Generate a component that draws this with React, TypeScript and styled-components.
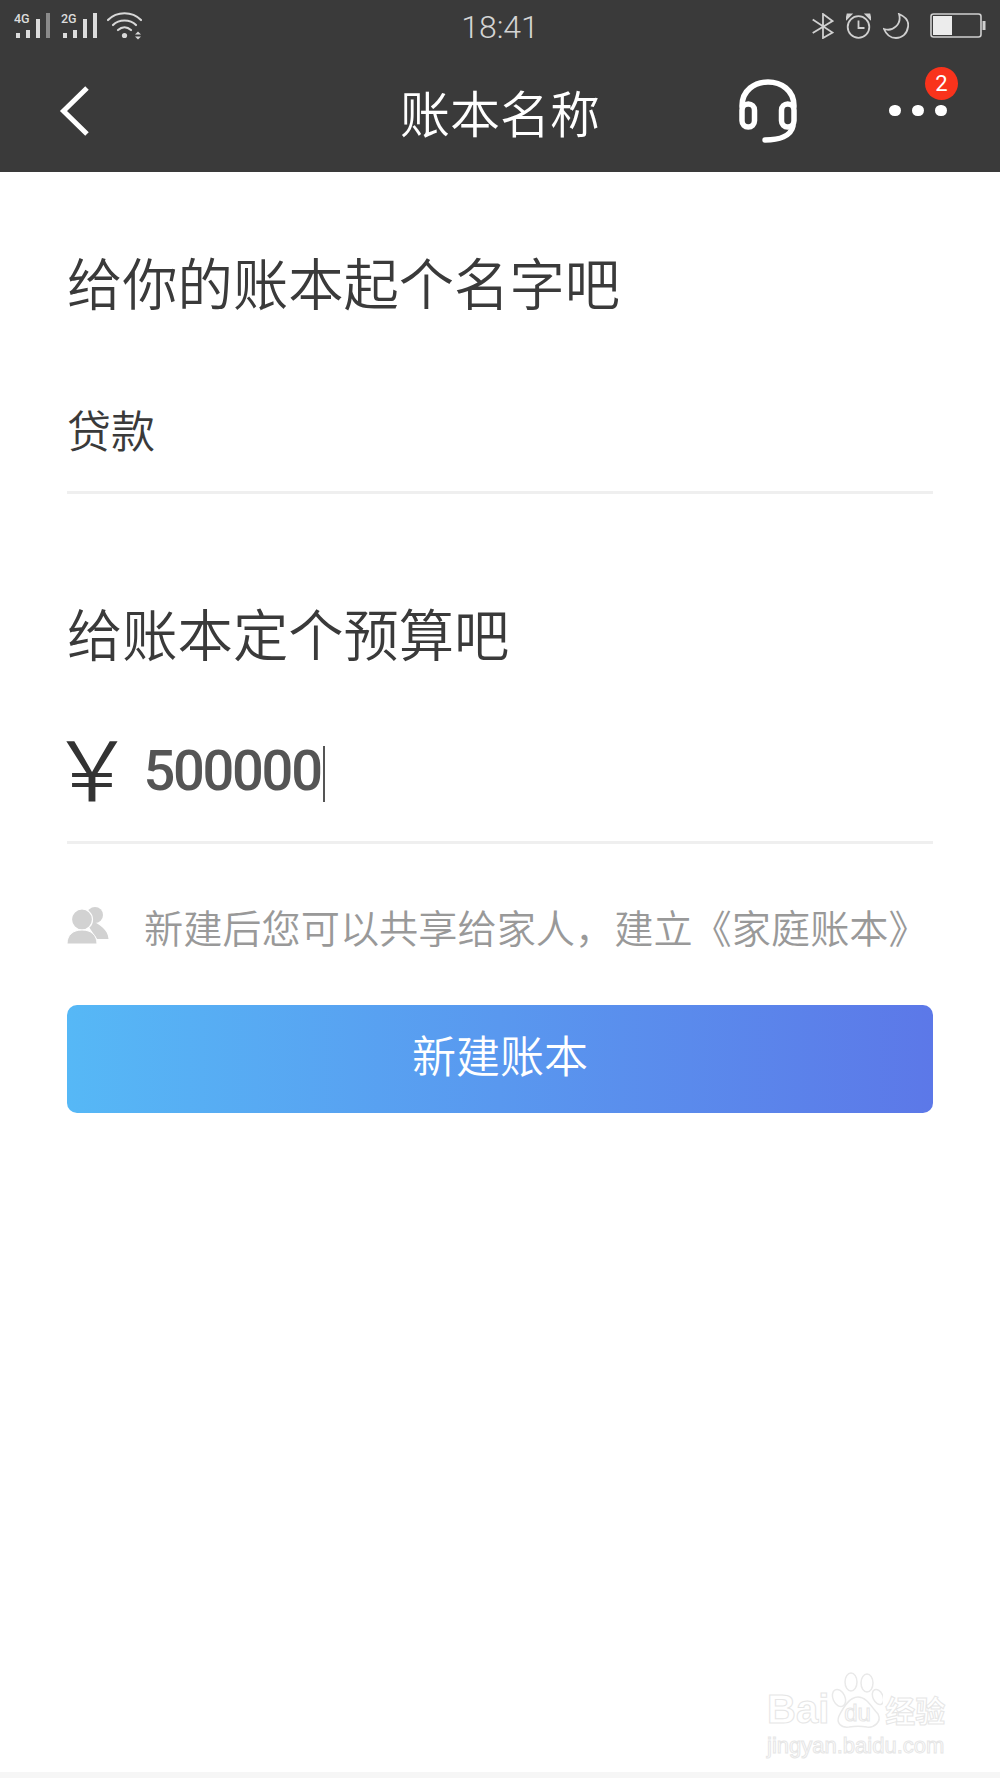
import React from "react";
import styled, { createGlobalStyle } from "styled-components";

const GlobalStyle = createGlobalStyle`
  html, body {
    margin: 0;
    padding: 0;
    background: #fff;
  }
  * {
    box-sizing: border-box;
  }
`;

const CJK = `"Noto Sans CJK SC", "Noto Sans", sans-serif`;

function CellSignal({ label }: { label: string }) {
  return (
    <svg width="37" height="28" viewBox="0 0 37 28">
      <text x="0" y="11" fontSize="12.5" fontFamily="Roboto, sans-serif" fontWeight="500" fill="#dcdcdc">
        {label}
      </text>
      <rect x="2" y="21" width="4" height="5" fill="#dcdcdc" />
      <rect x="12" y="18" width="4" height="8" fill="#dcdcdc" />
      <rect x="22" y="7" width="4" height="19" fill="#dcdcdc" />
      <rect x="32" y="1" width="4" height="25" fill={label === "4G" ? "#8a8a8a" : "#dcdcdc"} />
    </svg>
  );
}

function WifiIcon() {
  return (
    <svg width="35" height="28" viewBox="0 0 35 28" fill="none" stroke="#d8d8d8" strokeWidth="2.2" strokeLinecap="round">
      <path d="M1 8 C10 -1 25 -1 34 8" />
      <path d="M6 13 C12 7 23 7 29 13" />
      <path d="M11 18 C15 14.5 20 14.5 24 18" />
      <circle cx="17.5" cy="23.5" r="2.6" fill="#d8d8d8" stroke="none" />
      <path d="M28 22.5 L34 22.5 L31 19.5 Z" fill="#d8d8d8" stroke="none" />
      <path d="M28 24.5 L34 24.5 L31 27.5 Z" fill="#d8d8d8" stroke="none" />
    </svg>
  );
}

function BluetoothIcon() {
  return (
    <svg width="22" height="26" viewBox="0 0 22 26" fill="none" stroke="#d0d0d0" strokeWidth="1.8">
      <path d="M0.7 6.5 L20.5 19.5 L11 25 L11 1 L20.5 8 L0.7 20" />
    </svg>
  );
}

function AlarmIcon() {
  return (
    <svg width="25" height="26" viewBox="0 0 25 26" fill="none" stroke="#d0d0d0" strokeWidth="1.8">
      <circle cx="12.5" cy="14" r="10.8" />
      <path d="M12.5 7.5 L12.5 15 L18.5 15" />
      <path d="M0.5 6 L5 1.5 L1.5 1.5 Z" fill="#d0d0d0" />
      <path d="M24.5 6 L20 1.5 L23.5 1.5 Z" fill="#d0d0d0" />
    </svg>
  );
}

function MoonIcon() {
  return (
    <svg width="26" height="26" viewBox="0 0 26 26" fill="none" stroke="#d0d0d0" strokeWidth="1.8">
      <path d="M16 1 C23 4 26 9 25 14 C24 21 19 25 13 25 C7 25 3 21 1 16 C10 19 19 11 16 1 Z" />
    </svg>
  );
}

function BatteryIcon() {
  return (
    <svg width="56" height="26" viewBox="0 0 56 26">
      <rect x="1" y="1" width="50" height="23" rx="2.5" fill="none" stroke="#d0d0d0" strokeWidth="1.6" />
      <rect x="3" y="3" width="19" height="19" fill="#ececec" />
      <rect x="52.5" y="8" width="3" height="9" fill="#d0d0d0" />
    </svg>
  );
}

function BackIcon() {
  return (
    <svg width="32" height="52" viewBox="0 0 32 52" fill="none" stroke="#fff" strokeWidth="5">
      <path d="M28 3 L4.5 26 L28 49" />
    </svg>
  );
}

function HeadsetIcon() {
  return (
    <svg width="60" height="66" viewBox="0 0 60 66" fill="none" stroke="#fff" strokeWidth="5.5" strokeLinecap="round">
      <path d="M3 28 C3 -4 55 -4 55 28" />
      <rect x="3" y="26" width="12.5" height="23" rx="6.2" />
      <rect x="42.5" y="26" width="12.5" height="23" rx="6.2" />
      <path d="M54 48 C52 58 40 62 26 62" />
    </svg>
  );
}

function PeopleIcon() {
  return (
    <svg width="43" height="38" viewBox="0 0 43 38" fill="#d2d2d2">
      <circle cx="28" cy="8" r="8" />
      <path d="M26 14 C32 18 41 22 41.5 32 L30 32 L22 20 Z" />
      <circle cx="15" cy="12.5" r="10.5" stroke="#fff" strokeWidth="1.2" />
      <path d="M0 37 C0 28 6 23 15 23 C24 23 30 28 30 37 Z" stroke="#fff" strokeWidth="1" />
    </svg>
  );
}

function BaiduPaw() {
  return (
    <svg width="52" height="57" viewBox="0 0 52 57" fill="#fff" stroke="#e9e9e9" strokeWidth="1.5">
      <ellipse cx="8" cy="26" rx="6" ry="9" transform="rotate(-25 8 26)" />
      <ellipse cx="20" cy="10" rx="6" ry="9" />
      <ellipse cx="36" cy="11" rx="6" ry="9" />
      <ellipse cx="47" cy="25" rx="5" ry="8" transform="rotate(-25 47 25)" />
      <path d="M8 44 C12 36 18 25 27 25 C36 25 41 36 47 42 C51 50 43 56 36 55 C30 54 24 54 18 55 C10 56 5 51 8 44 Z" />
    </svg>
  );
}

export default function App() {
  return (
    <Page>
      <GlobalStyle />
      <Header>
        <StatusBar>
          <StatusLeft>
            <CellSignal label="4G" />
            <CellSignal label="2G" />
            <WifiIcon />
          </StatusLeft>
          <Clock>18:41</Clock>
          <StatusRight>
            <BluetoothIcon />
            <AlarmIcon />
            <MoonIcon />
            <BatteryIcon />
          </StatusRight>
        </StatusBar>
        <NavBar>
          <BackSlot>
            <BackIcon />
          </BackSlot>
          <Title>账本名称</Title>
          <HeadsetSlot>
            <HeadsetIcon />
          </HeadsetSlot>
          <MoreSlot>
            <Dot />
            <Dot />
            <Dot />
            <Badge>2</Badge>
          </MoreSlot>
        </NavBar>
      </Header>

      <Content>
        <Heading>给你的账本起个名字吧</Heading>
        <NameField>贷款</NameField>
        <BudgetHeading>给账本定个预算吧</BudgetHeading>
        <BudgetField>
          <Yen>￥</Yen>
          <Amount>500000</Amount>
          <Caret />
        </BudgetField>
        <Hint>
          <PeopleIcon />
          <HintText>新建后您可以共享给家人，建立《家庭账本》</HintText>
        </Hint>
        <CreateButton>新建账本</CreateButton>
      </Content>

      <Watermark>
        <WatermarkLogo>
          <LogoLatin>Bai</LogoLatin>
          <PawWrap>
            <BaiduPaw />
            <PawText>du</PawText>
          </PawWrap>
          <LogoCjk>经验</LogoCjk>
        </WatermarkLogo>
        <WatermarkUrl>jingyan.baidu.com</WatermarkUrl>
      </Watermark>
      <BottomStrip />
    </Page>
  );
}

const Page = styled.div`
  position: relative;
  width: 1000px;
  height: 1778px;
  overflow: hidden;
  background: #fff;
  font-family: ${CJK};
`;

const Header = styled.header`
  height: 172px;
  background: #3a3a3a;
`;

const StatusBar = styled.div`
  display: grid;
  grid-template-columns: 1fr auto 1fr;
  align-items: center;
  height: 52px;
  padding: 0 14px;
`;

const StatusLeft = styled.div`
  display: flex;
  align-items: center;
  gap: 10px;

  svg:last-child {
    margin-left: -1px;
  }
`;

const StatusRight = styled.div`
  display: flex;
  align-items: center;
  justify-content: flex-end;
  gap: 12px;

  svg:last-child {
    margin-left: 9px;
  }
`;

const Clock = styled.div`
  font-family: "Roboto", sans-serif;
  font-weight: 300;
  font-size: 32px;
  color: #d4d4d4;
  transform: translateY(1px);
`;

const NavBar = styled.div`
  display: flex;
  align-items: center;
  height: 120px;
  padding-bottom: 3px;
`;

const BackSlot = styled.div`
  display: flex;
  width: 400px;
  padding-left: 59px;
`;

const Title = styled.h1`
  width: 200px;
  margin: 0;
  font-size: 50px;
  font-weight: 350;
  color: #fff;
  white-space: nowrap;
`;

const HeadsetSlot = styled.div`
  display: flex;
  margin-left: 139px;
`;

const MoreSlot = styled.div`
  position: relative;
  display: flex;
  gap: 11.5px;
  margin-left: 90px;
`;

const Dot = styled.span`
  width: 11.5px;
  height: 11.5px;
  border-radius: 50%;
  background: #fff;
`;

const Badge = styled.span`
  position: absolute;
  left: 36px;
  top: -38px;
  width: 33px;
  height: 33px;
  border-radius: 50%;
  background: #f9331c;
  color: #fff;
  font-family: "Roboto", sans-serif;
  font-size: 22px;
  line-height: 33px;
  text-align: center;
`;

const Content = styled.main`
  display: flex;
  flex-direction: column;
  padding: 0 67px;
`;

const Heading = styled.h2`
  margin: 69px 0 0;
  font-size: 55.3px;
  line-height: 80px;
  font-weight: 350;
  color: #3a3a3a;
  white-space: nowrap;
`;

const BudgetHeading = styled(Heading)`
  margin-top: 98px;
`;

const NameField = styled.div`
  height: 173px;
  padding-top: 76px;
  border-bottom: 3px solid #efefef;
  font-size: 44px;
  line-height: 64px;
  font-weight: 350;
  color: #3a3a3a;
`;

const BudgetField = styled.div`
  display: flex;
  align-items: center;
  height: 172px;
  padding-top: 28px;
  border-bottom: 3px solid #efefef;
`;

const Yen = styled.span`
  width: 93px;
  margin: -12px 0 0 -16.5px;
  font-size: 83px;
  line-height: 80px;
  font-weight: 350;
  color: #333;
`;

const Amount = styled.span`
  font-family: "Roboto", sans-serif;
  font-weight: 500;
  font-size: 56px;
  line-height: 80px;
  letter-spacing: -2.3px;
  color: #555;
`;

const Caret = styled.span`
  width: 2.5px;
  height: 56px;
  margin: 6px 0 0 2px;
  background: #555;
`;

const Hint = styled.div`
  display: flex;
  align-items: center;
  height: 86px;
  margin-top: 39px;
  gap: 34px;
`;

const HintText = styled.span`
  font-size: 39.2px;
  font-weight: 350;
  color: #999;
  white-space: nowrap;
`;

const CreateButton = styled.button`
  height: 108px;
  margin-top: 36px;
  padding: 0 0 11px;
  border: 0;
  border-radius: 10px;
  background: linear-gradient(90deg, #56b8f6 0%, #5c78e8 100%);
  color: #fff;
  font-family: ${CJK};
  font-size: 44px;
  font-weight: 350;
`;

const Watermark = styled.div`
  position: absolute;
  left: 767px;
  top: 1672px;
  display: flex;
  flex-direction: column;
  color: transparent;
  -webkit-text-stroke: 1px #e6e6e6;
`;

const WatermarkLogo = styled.div`
  display: flex;
  align-items: flex-end;
  height: 57px;
`;

const LogoLatin = styled.span`
  font-family: "Liberation Sans", sans-serif;
  font-weight: 700;
  font-size: 40px;
  line-height: 40px;
`;

const PawWrap = styled.div`
  position: relative;
  display: flex;
  margin: 0 2px;
`;

const PawText = styled.span`
  position: absolute;
  left: 13px;
  bottom: 2px;
  font-family: "Liberation Sans", sans-serif;
  font-size: 24px;
`;

const LogoCjk = styled.span`
  font-size: 30px;
  line-height: 40px;
  font-weight: 700;
`;

const WatermarkUrl = styled.div`
  font-family: "Liberation Sans", sans-serif;
  font-size: 22px;
  line-height: 28px;
  margin-top: 3px;
  white-space: nowrap;
`;

const BottomStrip = styled.div`
  position: absolute;
  left: 0;
  right: 0;
  bottom: 0;
  height: 6px;
  background: #f6f6f6;
`;
